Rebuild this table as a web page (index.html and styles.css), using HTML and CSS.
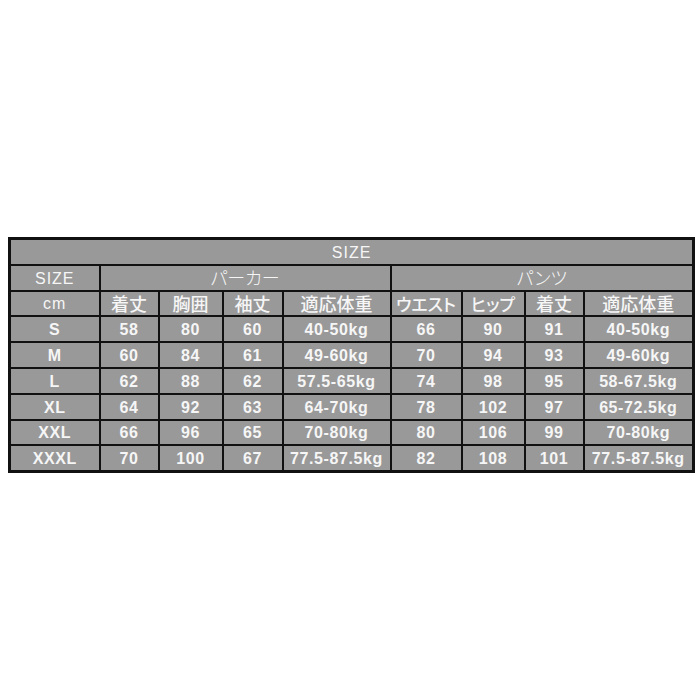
FILE: index.html
```html
<!DOCTYPE html>
<html lang="ja">
<head>
<meta charset="utf-8">
<link rel="stylesheet" href="styles.css">
</head>
<body>
<div class="page">
<table class="size-table">
<colgroup>
<col class="c1"><col class="c2"><col class="c3"><col class="c4"><col class="c5">
<col class="c6"><col class="c7"><col class="c8"><col class="c9">
</colgroup>
<tr><td colspan="9" class="lite">SIZE</td></tr>
<tr><td class="lite">SIZE</td><td colspan="4" class="jp thin">パーカー</td><td colspan="4" class="jp thin">パンツ</td></tr>
<tr><td class="lite">cm</td><td class="jp">着丈</td><td class="jp">胸囲</td><td class="jp">袖丈</td><td class="jp">適応体重</td><td class="jp kana">ウエスト</td><td class="jp kana">ヒップ</td><td class="jp">着丈</td><td class="jp">適応体重</td></tr>
<tr><td>S</td><td>58</td><td>80</td><td>60</td><td>40-50kg</td><td>66</td><td>90</td><td>91</td><td>40-50kg</td></tr>
<tr><td>M</td><td>60</td><td>84</td><td>61</td><td>49-60kg</td><td>70</td><td>94</td><td>93</td><td>49-60kg</td></tr>
<tr><td>L</td><td>62</td><td>88</td><td>62</td><td>57.5-65kg</td><td>74</td><td>98</td><td>95</td><td>58-67.5kg</td></tr>
<tr><td>XL</td><td>64</td><td>92</td><td>63</td><td>64-70kg</td><td>78</td><td>102</td><td>97</td><td>65-72.5kg</td></tr>
<tr><td>XXL</td><td>66</td><td>96</td><td>65</td><td>70-80kg</td><td>80</td><td>106</td><td>99</td><td>70-80kg</td></tr>
<tr><td>XXXL</td><td>70</td><td>100</td><td>67</td><td>77.5-87.5kg</td><td>82</td><td>108</td><td>101</td><td>77.5-87.5kg</td></tr>
</table>
</div>
</body>
</html>
```
FILE: styles.css
```css
html, body {
  margin: 0;
  padding: 0;
  background: #ffffff;
}
.page {
  width: 700px;
  height: 700px;
  box-sizing: border-box;
  padding: 237px 8px 0 8px;
}
.size-table {
  width: 684px;
  table-layout: fixed;
  border-collapse: collapse;
  border: 3px solid #111111;
  background: #999999;
  font-family: "Liberation Sans", "Noto Sans CJK JP", sans-serif;
  font-size: 16px;
  font-weight: bold;
  letter-spacing: 0.6px;
  color: #f6f6f6;
}
.c1 { width: 90px; }
.c2 { width: 59px; }
.c3 { width: 64px; }
.c4 { width: 60px; }
.c5 { width: 108px; }
.c6 { width: 71px; }
.c7 { width: 63px; }
.c8 { width: 59px; }
.c9 { width: 110px; }
.size-table td {
  border: 2px solid #111111;
  height: 22.8px;
  padding: 1px 0 0 0;
  text-align: center;
  vertical-align: middle;
  white-space: nowrap;
  overflow: hidden;
  line-height: 19px;
}
.size-table td.lite {
  font-weight: normal;
  letter-spacing: 1px;
}
.size-table td.jp {
  font-family: "Noto Sans CJK JP", sans-serif;
  font-size: 18px;
  font-weight: 500;
  letter-spacing: 0;
  padding-top: 0;
}
.size-table td.thin {
  font-weight: 300;
  font-feature-settings: "palt";
}
.size-table td.kana {
  font-size: 17px;
  font-feature-settings: "palt";
}
```
